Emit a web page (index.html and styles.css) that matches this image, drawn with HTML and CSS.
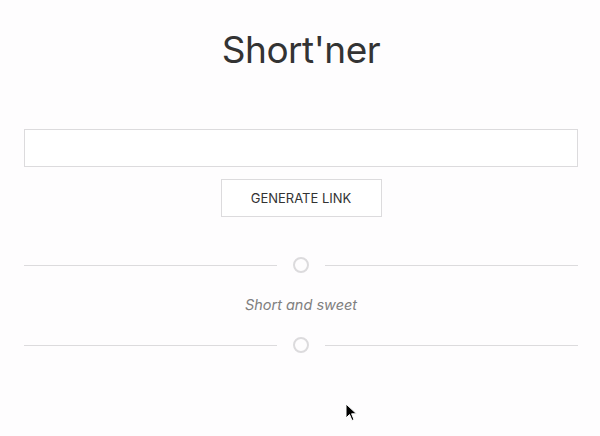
FILE: index.html
```html
<!DOCTYPE html>
<html>
<head>
<meta charset="utf-8">
<link rel="stylesheet" href="styles.css">
</head>
<body>
<main class="page">
  <h1 class="title">Short'ner</h1>
  <input class="url-input" type="text">
  <button class="gen-btn">GENERATE LINK</button>
  <div class="divider"><span class="line"></span><span class="ring"></span><span class="line"></span></div>
  <p class="tagline">Short and sweet</p>
  <div class="divider"><span class="line"></span><span class="ring"></span><span class="line"></span></div>
</main>
<svg class="cursor" width="14" height="20" viewBox="0 0 14 20"><path d="M1 1 L1 15 L4.5 11.5 L7 17.5 L9 16.6 L6.6 10.8 L11.5 10.8 Z" fill="#000" stroke="#fff" stroke-width="1"/></svg>
</body>
</html>
```
FILE: styles.css
```css
html, body { margin: 0; padding: 0; }
body { background: #fefdfe; font-family: Inter, "Liberation Sans", sans-serif; width: 600px; height: 436px; overflow: hidden; position: relative; }
.page { width: 554px; margin-left: 24px; display: flex; flex-direction: column; align-items: center; }
.title { margin: 27px 0 0; font-size: 37px; font-weight: 400; color: #333; line-height: 46px; letter-spacing: -0.5px; }
.url-input { margin-top: 56px; width: 554px; height: 38px; box-sizing: border-box; border: 1px solid #dcdbdd; background: #fff; outline: none; padding: 0 10px; }
.gen-btn { margin-top: 12px; width: 161px; height: 38px; box-sizing: border-box; border: 1px solid #dcdbdd; background: #fff; font-family: Inter, "Liberation Sans", sans-serif; font-size: 13px; color: #333; letter-spacing: 0; }
.divider { margin-top: 40px; width: 554px; display: flex; align-items: center; gap: 16px; }
.divider .line { flex: 1; height: 1px; background: #dcdbdd; }
.divider .ring { width: 12px; height: 12px; border: 2px solid #dcdbdd; border-radius: 50%; }
.tagline { margin: 23px 0 0; font-size: 14.5px; font-style: italic; color: #808080; line-height: 18px; }
.tagline + .divider { margin-top: 23px; }
.cursor { position: absolute; left: 345px; top: 403px; }
```
